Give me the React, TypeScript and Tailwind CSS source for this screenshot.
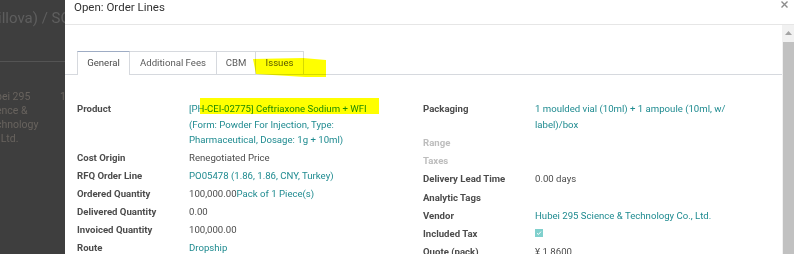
import React from "react";

const font = { fontFamily: "Roboto, 'Liberation Sans', sans-serif" };

const Row: React.FC<{ label: string; empty?: boolean; children?: React.ReactNode }> = ({
  label,
  empty,
  children,
}) => (
  <div className="flex py-[1.25px] leading-[15.5px]">
    <div className={`w-[112px] shrink-0 font-bold ${empty ? "text-[#bdbdbd]" : "text-[#4c4c4c]"}`}>
      {label}
    </div>
    <div className="flex-1 text-[#4c4c4c]">{children}</div>
  </div>
);

const Link: React.FC<{ children: React.ReactNode }> = ({ children }) => (
  <span className="text-[#1f8b90]">{children}</span>
);

const tabs = [
  { name: "General", w: "w-[53px] border-l", active: true },
  { name: "Additional Fees", w: "w-[87px]" },
  { name: "CBM", w: "w-[39px]" },
  { name: "Issues", w: "w-[48px]" },
];

export default function App() {
  return (
    <div className="relative flex w-[794px] h-[254px] overflow-hidden bg-[#3e3e3e]" style={font}>
      {/* page behind the dialog */}
      <div className="w-[65px] shrink-0 overflow-hidden text-[#5e5e5e]">
        <div className="ml-[-2px] mt-[8px] whitespace-nowrap text-[15px] leading-[20px]">illova) / SO</div>
        <div className="mt-[33px] border-t border-[#545454]" />
        <div className="relative mt-[28px] ml-[-4px] whitespace-nowrap text-[10.5px] leading-[14px] text-[#68635e]">
          <div>bei 295</div>
          <div>ence &amp;</div>
          <div>chnology</div>
          <div>, Ltd.</div>
          <span className="absolute left-[64px] top-0">1</span>
        </div>
      </div>

      {/* dialog */}
      <div className="flex flex-1 flex-col bg-white">
        <div className="flex h-[25px] shrink-0 items-start justify-between border-b border-[#e6e6e6]">
          <div className="ml-[9px] text-[11.5px] leading-[14px] text-[#333]">Open: Order Lines</div>
          <svg className="mr-[6px] mt-[1px]" width="7" height="7" viewBox="0 0 7 7">
            <path d="M0.5 0.5L6.5 6.5M6.5 0.5L0.5 6.5" stroke="#8c8c8c" strokeWidth="1.4" />
          </svg>
        </div>

        <div className="flex flex-1 min-h-0">
          <div className="relative flex-1 pt-[26px] text-[9.6px]">
            <div className="flex h-[24px] border-b border-[#d6d9de] pl-[12px]">
              {tabs.map((t) => (
                <div
                  key={t.name}
                  className={`${t.w} flex h-[24px] items-center justify-center border-r border-t ${
                    t.active
                      ? "border-[#d6d9de] border-t-[#9eacc4] bg-white text-[#4a4a4a]"
                      : "border-b border-[#d6d9de] text-[#5a5a5a]"
                  }`}
                >
                  {t.name}
                </div>
              ))}
            </div>

            <div className="mt-[25px] grid grid-cols-[346px_1fr] pl-[12px]">
              <div>
                <Row label="Product">
                  <div className="relative">
                    <span className="absolute left-[11px] top-[-3px] h-[16px] w-[179px] bg-[#ffff00] mix-blend-multiply" />
                    <Link>
                      <div>[PH-CEI-02775] Ceftriaxone Sodium + WFI</div>
                      <div>(Form: Powder For Injection, Type:</div>
                      <div>Pharmaceutical, Dosage: 1g + 10ml)</div>
                    </Link>
                  </div>
                </Row>
                <Row label="Cost Origin">Renegotiated Price</Row>
                <Row label="RFQ Order Line">
                  <Link>PO05478 (1.86, 1.86, CNY, Turkey)</Link>
                </Row>
                <Row label="Ordered Quantity">
                  100,000.00<Link>Pack of 1 Piece(s)</Link>
                </Row>
                <Row label="Delivered Quantity">0.00</Row>
                <Row label="Invoiced Quantity">100,000.00</Row>
                <Row label="Route">
                  <Link>Dropship</Link>
                </Row>
              </div>
              <div>
                <Row label="Packaging">
                  <Link>
                    <div>1 moulded vial (10ml) + 1 ampoule (10ml, w/</div>
                    <div>label)/box</div>
                  </Link>
                </Row>
                <Row label="Range" empty />
                <Row label="Taxes" empty />
                <Row label="Delivery Lead Time">0.00 days</Row>
                <div className="h-[1px]" />
                <Row label="Analytic Tags" />
                <Row label="Vendor">
                  <Link>Hubei 295 Science &amp; Technology Co., Ltd.</Link>
                </Row>
                <Row label="Included Tax">
                  <span className="mt-[3.5px] flex h-[8px] w-[8px] items-center justify-center bg-[#80d0cd]">
                    <svg width="6" height="6" viewBox="0 0 6 6">
                      <path d="M1 3.2L2.4 4.5L5 1.6" stroke="#fff" strokeWidth="1" fill="none" />
                    </svg>
                  </span>
                </Row>
                <Row label="Quote (pack)">¥ 1.8600</Row>
              </div>
            </div>

            {/* highlighter mark on the Issues tab */}
            <svg className="absolute left-[188px] top-[33px] mix-blend-multiply" width="74" height="20" viewBox="0 0 74 20">
              <polygon points="0,1 50,0 73,2 73,19 52,19 3,16" fill="#ffff00" />
            </svg>
          </div>

          {/* scrollbar */}
          <div className="flex w-[12px] shrink-0 flex-col items-center bg-[#f1f1f1]">
            <svg className="mt-[6px]" width="7" height="4" viewBox="0 0 7 4">
              <polygon points="3.5,0 7,4 0,4" fill="#a3a3a3" />
            </svg>
            <div className="mt-[7px] w-[11px] flex-1 bg-[#c1c1c1]" />
          </div>
        </div>
      </div>
    </div>
  );
}
